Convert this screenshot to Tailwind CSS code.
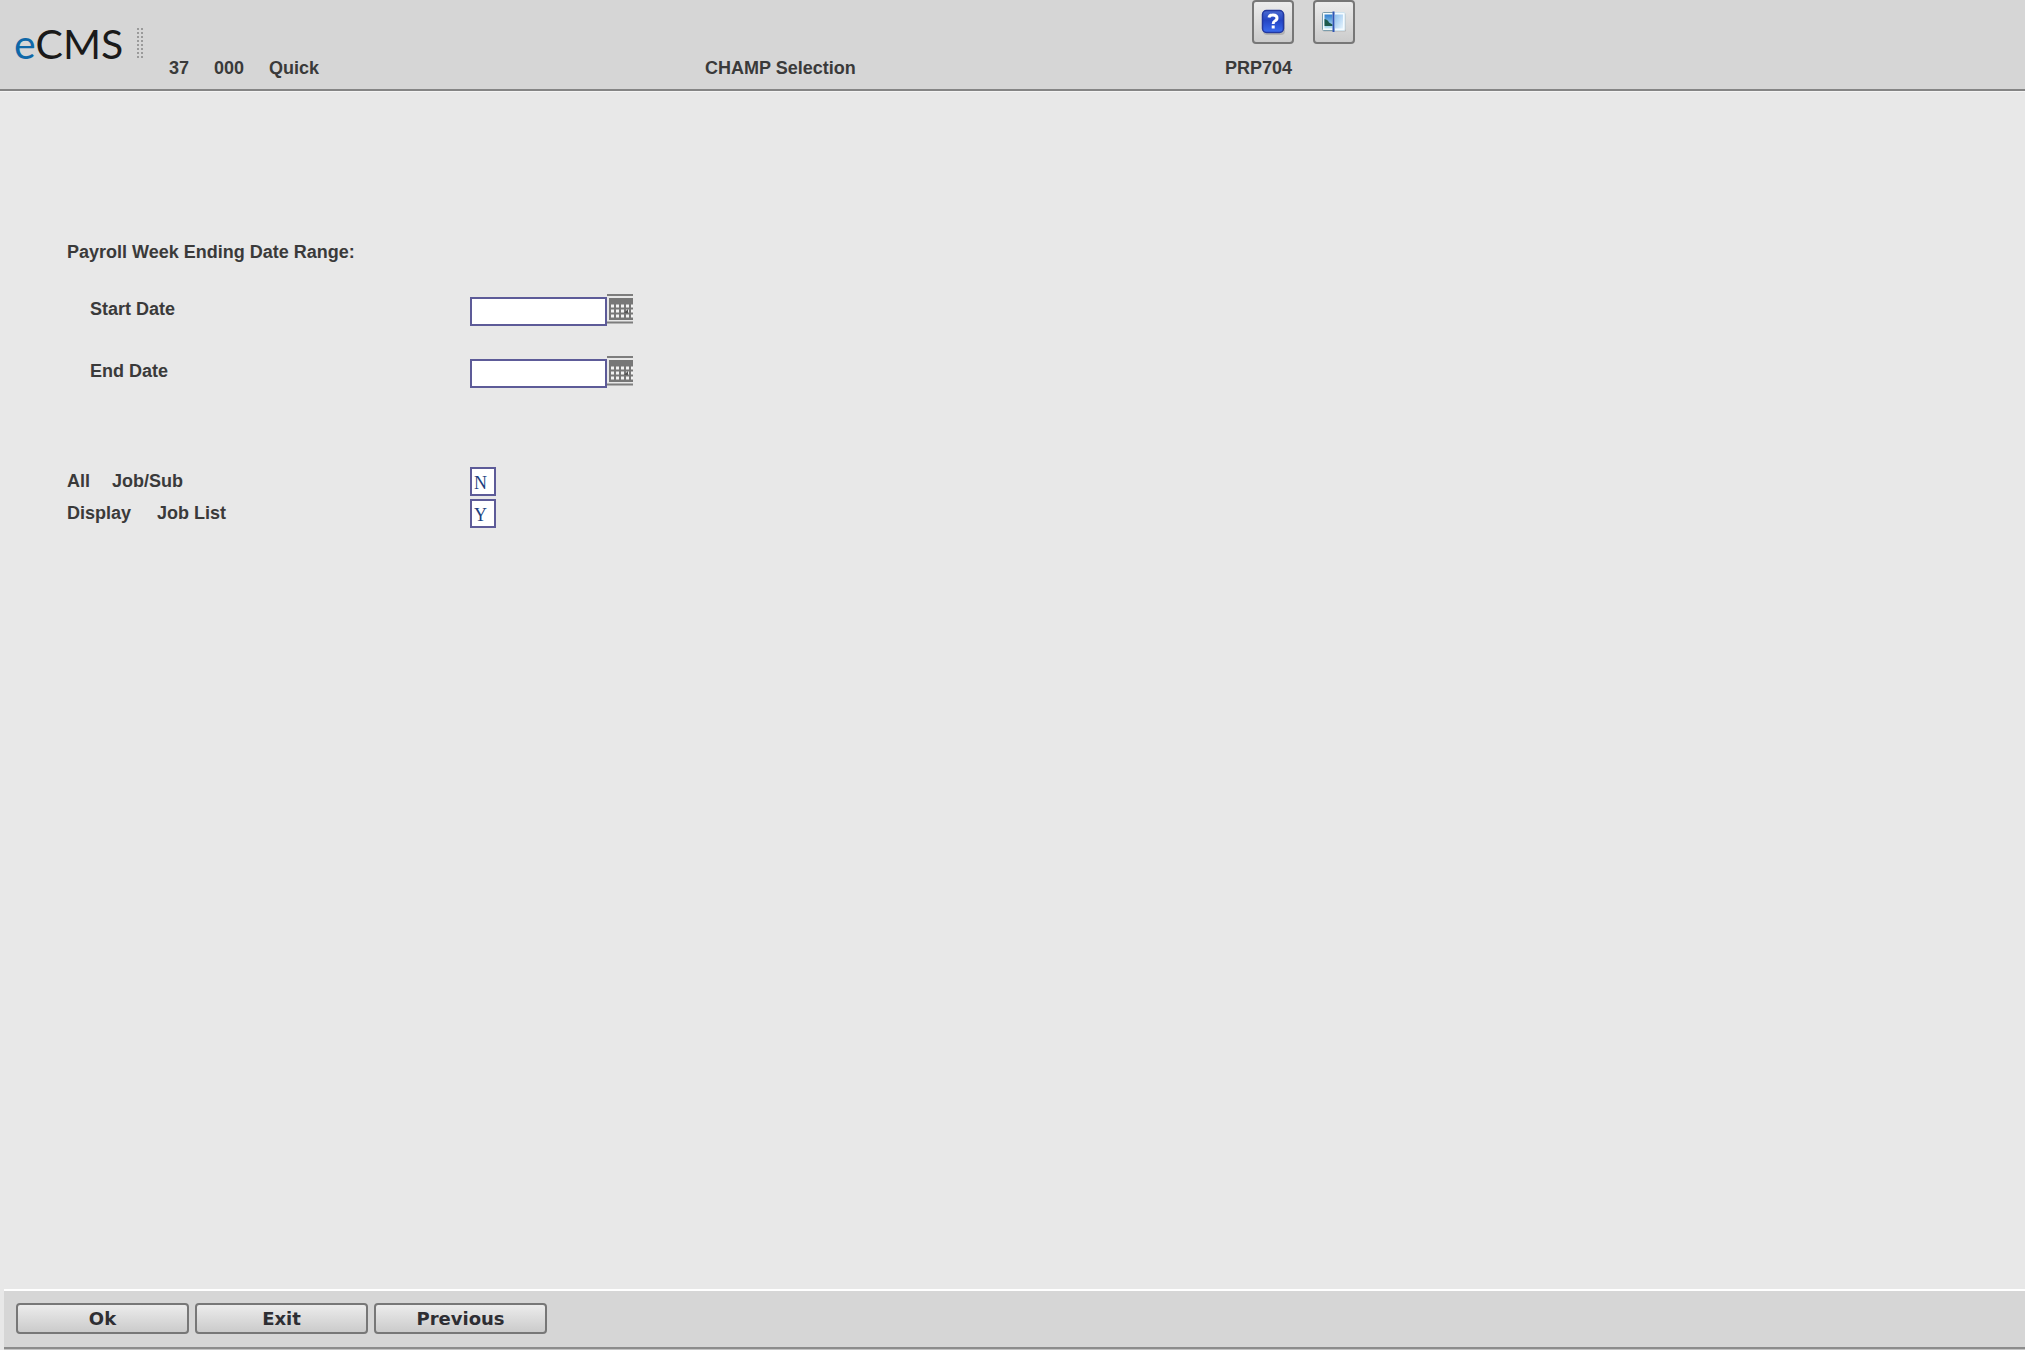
<!DOCTYPE html>
<html lang="en">
<head>
<meta charset="utf-8">
<meta name="viewport" content="width=device-width, initial-scale=1">
<title>eCMS - CHAMP Selection</title>
<script src="https://cdn.jsdelivr.net/npm/@tailwindcss/browser@4"></script>
</head>
<body class="flex min-h-screen flex-col bg-[#e8e8e8] font-['Liberation_Sans',sans-serif] text-[18px] leading-6 font-bold text-[#3a3a3a]">

<header class="flex border-b-2 border-[#858585] bg-[#d6d6d6] shadow-[0_1px_0_#f4f4f4]">
  <div class="flex w-[169px] shrink-0 items-start gap-4 pt-5 pl-[14px]">
    <span class="font-[Lato,sans-serif] text-[41px] leading-[48px] font-normal text-[#1a1a1a]"><span class="text-[#0f68a8]">e</span>CMS</span>
    <svg class="mt-2 -ml-0.5 shrink-0" width="6" height="30" viewBox="0 0 6 30" aria-hidden="true">
      <path d="M1 0V30M5 0V30" stroke="#9a9a9a" stroke-width="2" stroke-dasharray="2 2"/>
    </svg>
  </div>
  <div class="flex-1">
    <div class="flex h-14 items-start gap-[19px] pl-[1083px]">
      <button type="button" aria-label="Help" class="flex h-11 w-[42px] items-center justify-center rounded-[4px] border-2 border-[#777] bg-linear-to-b from-[#ececec] to-[#cbcbcb]">
        <svg width="26" height="26" viewBox="0 0 26 26">
          <defs><linearGradient id="help" x1="0" y1="0" x2="0" y2="1"><stop offset="0" stop-color="#4a6ad0"/><stop offset=".45" stop-color="#2445c4"/><stop offset="1" stop-color="#3b6cf0"/></linearGradient></defs>
          <rect x="3" y="3" width="22" height="23" rx="4" fill="#000" opacity=".15"/>
          <rect x="2.500" y="1.500" width="21" height="22" rx="4" fill="url(#help)" stroke="#2338a0" stroke-width="1.500"/>
          <path d="M9 8.500Q9.500 6 13 6Q17 6 17 9Q17 11 14.800 12Q13.200 12.700 13.200 15" fill="none" stroke="#fff" stroke-width="3"/>
          <rect x="11.700" y="16.500" width="3" height="3" fill="#fff"/>
        </svg>
      </button>
      <button type="button" aria-label="Split view" class="flex h-11 w-[42px] items-center justify-center rounded-[4px] border-2 border-[#777] bg-linear-to-b from-[#ececec] to-[#cbcbcb]">
        <svg width="26" height="26" viewBox="0 0 26 26">
          <defs>
            <linearGradient id="sky" x1="0" y1="0" x2="0" y2="1"><stop offset="0" stop-color="#2f7fd0"/><stop offset="1" stop-color="#bfe6f5"/></linearGradient>
            <linearGradient id="pale" x1="0" y1="0" x2="1" y2="1"><stop offset="0" stop-color="#8fc0ee"/><stop offset="1" stop-color="#e6f4fd"/></linearGradient>
          </defs>
          <rect x="2" y="4.500" width="23" height="18" rx="1" fill="#000" opacity=".15"/>
          <rect x="1.500" y="3.500" width="11" height="18" rx="1" fill="#f4fafa" stroke="#7a9cab"/>
          <rect x="13" y="3.500" width="11" height="18" rx="1" fill="#f4fbff" stroke="#cfe3ee"/>
          <rect x="3.500" y="5.500" width="8" height="14" fill="url(#sky)"/>
          <path d="M3.500 10Q7 10.500 8 13.500L11.500 15.500V17H3.500Z" fill="#1d5a4c"/>
          <rect x="14" y="5.500" width="8" height="14" fill="url(#pale)"/>
          <path d="M12.500 2.500V23" stroke="#2f55b5" stroke-width="2"/>
        </svg>
      </button>
    </div>
    <div class="flex h-[33px]">
      <div class="flex w-[536px] gap-[25px]"><span>37</span><span>000</span><span>Quick</span></div>
      <h1 class="w-[520px]">CHAMP Selection</h1>
      <span>PRP704</span>
    </div>
  </div>
</header>

<main class="flex-1 pt-[149px] pl-[67px]">
  <form id="selection">
    <h2>Payroll Week Ending Date Range:</h2>
    <div class="mt-[30px] flex h-8">
      <label for="start" class="w-[403px] pt-[3px] pl-[23px]">Start Date</label>
      <input id="start" type="text" class="mt-[3px] h-[29px] w-[137px] border-2 border-[#5d5b98] bg-white px-1 font-['Liberation_Serif',serif] font-normal text-[#1c3f80]">
      <button type="button" aria-label="Pick start date" class="h-[30px] w-[26px]">
        <svg width="26" height="30" viewBox="0 0 26 30">
          <path d="M0 1H26M0 28.500H26" stroke="#7d7d7d" stroke-width="2"/>
          <rect x="2" y="4" width="24" height="22" fill="#777"/>
          <path d="M4 12H26M4 17H26M4 22H26" stroke="#f2f2f2" stroke-width="3" stroke-dasharray="3 2"/>
          <path d="M17 19L21 15V19Z" fill="#555"/>
        </svg>
      </button>
    </div>
    <div class="mt-[30px] flex h-8">
      <label for="end" class="w-[403px] pt-[3px] pl-[23px]">End Date</label>
      <input id="end" type="text" class="mt-[3px] h-[29px] w-[137px] border-2 border-[#5d5b98] bg-white px-1 font-['Liberation_Serif',serif] font-normal text-[#1c3f80]">
      <button type="button" aria-label="Pick end date" class="h-[30px] w-[26px]">
        <svg width="26" height="30" viewBox="0 0 26 30">
          <path d="M0 1H26M0 28.500H26" stroke="#7d7d7d" stroke-width="2"/>
          <rect x="2" y="4" width="24" height="22" fill="#777"/>
          <path d="M4 12H26M4 17H26M4 22H26" stroke="#f2f2f2" stroke-width="3" stroke-dasharray="3 2"/>
          <path d="M17 19L21 15V19Z" fill="#555"/>
        </svg>
      </button>
    </div>
    <div class="mt-[79px] flex h-8">
      <label for="alljobs" class="flex w-[403px] gap-[22px] pt-[2px]"><span>All</span><span>Job/Sub</span></label>
      <input id="alljobs" type="text" maxlength="1" value="N" class="h-[29px] w-[26px] border-2 border-[#5d5b98] bg-white pt-1 pl-[2px] font-['Liberation_Serif',serif] font-normal text-[#1c3f80]">
    </div>
    <div class="flex h-8">
      <label for="joblist" class="flex w-[403px] gap-[26px] pt-[2px]"><span>Display</span><span>Job List</span></label>
      <input id="joblist" type="text" maxlength="1" value="Y" class="h-[29px] w-[26px] border-2 border-[#5d5b98] bg-white pt-1 pl-[2px] font-['Liberation_Serif',serif] font-normal text-[#1c3f80]">
    </div>
  </form>
</main>

<footer class="ml-1 flex gap-[6px] border-t-2 border-white bg-[#d6d6d6] pt-3 pb-4 pl-3 font-['DejaVu_Sans',sans-serif] text-[#2e2e33] shadow-[inset_0_-1px_0_#c4c4c4,inset_0_-3px_0_#8c8c8c]">
  <button type="submit" form="selection" class="h-[31px] w-[173px] rounded-[4px] border-2 border-[#777] bg-linear-to-b from-[#ececec] to-[#cbcbcb]">Ok</button>
  <button type="button" class="h-[31px] w-[173px] rounded-[4px] border-2 border-[#777] bg-linear-to-b from-[#ececec] to-[#cbcbcb]">Exit</button>
  <button type="button" class="h-[31px] w-[173px] rounded-[4px] border-2 border-[#777] bg-linear-to-b from-[#ececec] to-[#cbcbcb]">Previous</button>
</footer>
</body>
</html>
